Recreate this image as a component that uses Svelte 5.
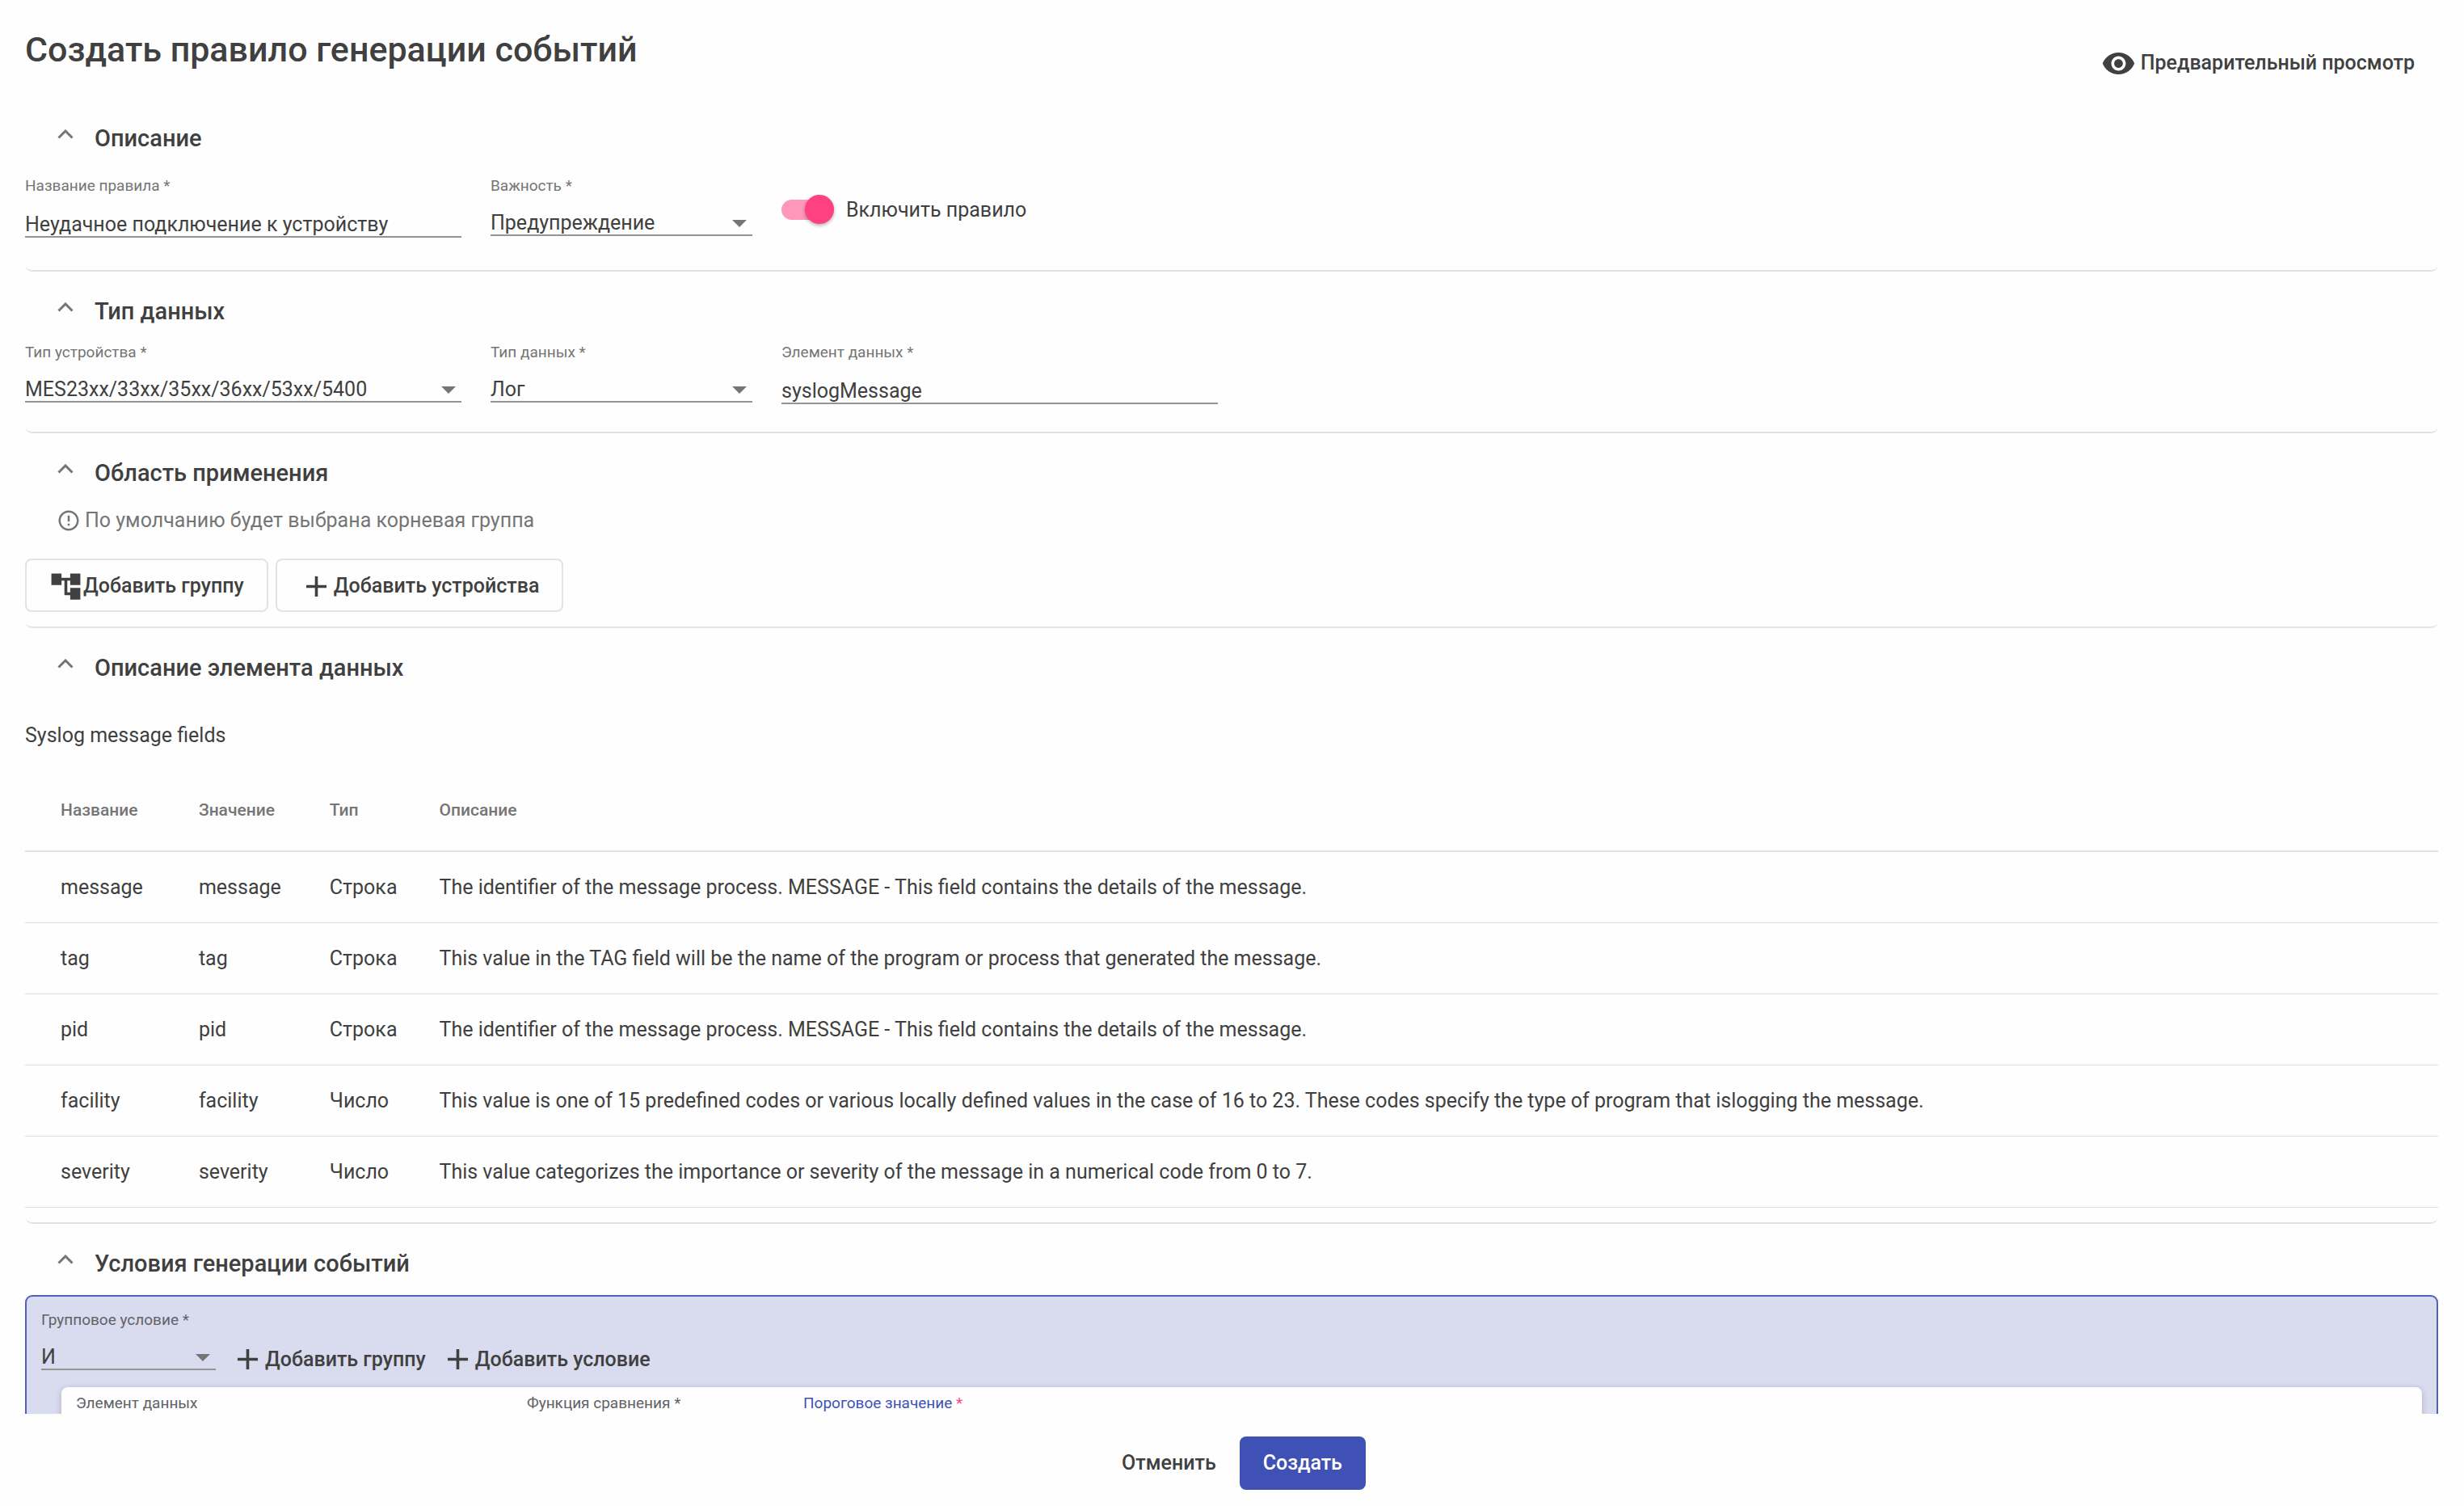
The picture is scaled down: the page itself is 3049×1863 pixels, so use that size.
<script lang="ts">
  type Row = { name: string; value: string; type: string; text: string };

  const fields: Row[] = [
    { name: 'message', value: 'message', type: 'Строка', text: 'The identifier of the message process. MESSAGE - This field contains the details of the message.' },
    { name: 'tag', value: 'tag', type: 'Строка', text: 'This value in the TAG field will be the name of the program or process that generated the message.' },
    { name: 'pid', value: 'pid', type: 'Строка', text: 'The identifier of the message process. MESSAGE - This field contains the details of the message.' },
    { name: 'facility', value: 'facility', type: 'Число', text: 'This value is one of 15 predefined codes or various locally defined values in the case of 16 to 23. These codes specify the type of program that islogging the message.' },
    { name: 'severity', value: 'severity', type: 'Число', text: 'This value categorizes the importance or severity of the message in a numerical code from 0 to 7.' }
  ];

  let open = $state({ about: true, data: true, scope: true, element: true, rules: true });
  let ruleName = $state('Неудачное подключение к устройству');
  let element = $state('syslogMessage');
  let threshold = $state('');
  let enabled = $state(true);
</script>

{#snippet sectionTitle(key: keyof typeof open, text: string)}
  <h2>
    <button type="button" class="toggle-section" aria-expanded={open[key]} onclick={() => (open[key] = !open[key])}>
      <svg class="chevron" class:closed={!open[key]} viewBox="0 0 20 12" aria-hidden="true">
        <path d="M1.5 10.5 10 2l8.5 8.5" />
      </svg>
      <span>{text}</span>
    </button>
  </h2>
{/snippet}

{#snippet plus()}
  <svg class="icon" viewBox="0 0 24 24" aria-hidden="true"><path d="M19 13h-6v6h-2v-6H5v-2h6V5h2v6h6v2z" /></svg>
{/snippet}

{#snippet arrow()}
  <svg class="arrow" viewBox="0 0 18 9" aria-hidden="true"><path d="M0 0h18l-9 9z" /></svg>
{/snippet}

<div class="page">
  <main>
    <header>
      <h1>Создать правило генерации событий</h1>
      <button type="button" class="btn preview">
        <svg class="icon" viewBox="0 0 24 24" aria-hidden="true">
          <path d="M12 4.5C7 4.5 2.73 7.61 1 12c1.73 4.39 6 7.5 11 7.5s9.27-3.11 11-7.5c-1.73-4.39-6-7.5-11-7.5zM12 17c-2.76 0-5-2.24-5-5s2.24-5 5-5 5 2.24 5 5-2.24 5-5 5zm0-8c-1.66 0-3 1.34-3 3s1.34 3 3 3 3-1.34 3-3-1.34-3-3-3z" />
        </svg>
        Предварительный просмотр
      </button>
    </header>

    <section>
      {@render sectionTitle('about', 'Описание')}
      {#if open.about}
        <div class="fields roomy">
          <div class="field">
            <label for="rule-name">Название правила *</label>
            <input id="rule-name" type="text" bind:value={ruleName} />
          </div>
          <div class="field">
            <label for="level">Важность *</label>
            <div class="select">
              <select id="level"><option>Предупреждение</option></select>
              {@render arrow()}
            </div>
          </div>
          <label class="switch">
            <input type="checkbox" role="switch" bind:checked={enabled} />
            Включить правило
          </label>
        </div>
      {/if}
    </section>

    <section>
      {@render sectionTitle('data', 'Тип данных')}
      {#if open.data}
        <div class="fields">
          <div class="field">
            <label for="device-type">Тип устройства *</label>
            <div class="select">
              <select id="device-type"><option>MES23xx/33xx/35xx/36xx/53xx/5400</option></select>
              {@render arrow()}
            </div>
          </div>
          <div class="field">
            <label for="data-type">Тип данных *</label>
            <div class="select">
              <select id="data-type"><option>Лог</option></select>
              {@render arrow()}
            </div>
          </div>
          <div class="field">
            <label for="data-element">Элемент данных *</label>
            <input id="data-element" type="text" bind:value={element} />
          </div>
        </div>
      {/if}
    </section>

    <section>
      {@render sectionTitle('scope', 'Область применения')}
      {#if open.scope}
        <p class="hint">
          <svg viewBox="0 0 24 24" aria-hidden="true">
            <path d="M11 15h2v2h-2zm0-8h2v6h-2zm.99-5C6.47 2 2 6.48 2 12s4.47 10 9.99 10C17.52 22 22 17.52 22 12S17.52 2 11.99 2zM12 20c-4.42 0-8-3.58-8-8s3.58-8 8-8 8 3.58 8 8-3.58 8-8 8z" />
          </svg>
          По умолчанию будет выбрана корневая группа
        </p>
        <div class="actions">
          <button type="button" class="btn outlined">
            <svg class="icon" viewBox="0 0 24 24" aria-hidden="true"><path d="M22 11V3h-7v3H9V3H2v8h7V8h2v10h4v3h7v-8h-7v3h-2V8h2v3z" /></svg>
            Добавить группу
          </button>
          <button type="button" class="btn outlined">{@render plus()}Добавить устройства</button>
        </div>
      {/if}
    </section>

    <section>
      {@render sectionTitle('element', 'Описание элемента данных')}
      {#if open.element}
        <p class="caption">Syslog message fields</p>
        <table>
          <thead>
            <tr><th scope="col">Название</th><th scope="col">Значение</th><th scope="col">Тип</th><th scope="col">Описание</th></tr>
          </thead>
          <tbody>
            {#each fields as row (row.name)}
              <tr><td>{row.name}</td><td>{row.value}</td><td>{row.type}</td><td>{row.text}</td></tr>
            {/each}
          </tbody>
        </table>
      {/if}
    </section>

    <section>
      {@render sectionTitle('rules', 'Условия генерации событий')}
      {#if open.rules}
        <div class="group">
          <div class="group-head">
            <div class="field">
              <label for="group-op">Групповое условие *</label>
              <div class="select">
                <select id="group-op"><option>И</option><option>ИЛИ</option></select>
                {@render arrow()}
              </div>
            </div>
            <button type="button" class="btn inline">{@render plus()}Добавить группу</button>
            <button type="button" class="btn inline">{@render plus()}Добавить условие</button>
          </div>
          <div class="condition">
            <div class="field">
              <label for="cond-element">Элемент данных</label>
              <div class="select"><select id="cond-element"></select></div>
            </div>
            <div class="field">
              <label for="cond-fn">Функция сравнения *</label>
              <div class="select"><select id="cond-fn"></select></div>
            </div>
            <div class="field active">
              <label for="cond-value">Пороговое значение <span class="star">*</span></label>
              <input id="cond-value" type="text" bind:value={threshold} />
            </div>
          </div>
        </div>
      {/if}
    </section>
  </main>

  <footer>
    <button type="button" class="btn cancel">Отменить</button>
    <button type="button" class="btn primary">Создать</button>
  </footer>
</div>

<style>
  :global(body) {
    background: #fefefe;
  }

  .page {
    --text: #404040;
    --muted: #757575;
    --line: #e3e3e3;
    --primary: #3f51b5;
    --accent: #ff4081;
    display: flex;
    flex-direction: column;
    height: 100vh;
    color: var(--text);
    font-family: Roboto, 'Noto Sans', sans-serif;
    font-size: 25px;
    line-height: 30px;
  }

  main {
    flex: 1;
    min-height: 0;
    overflow: hidden;
    padding: 0 32px 0 31px;
  }

  h1, h2, p {
    margin: 0;
  }

  button, input, select {
    font: inherit;
    color: inherit;
  }

  header {
    display: flex;
    justify-content: space-between;
    height: 122px;
  }

  h1 {
    padding-top: 36px;
    font-size: 43px;
    font-weight: 500;
    line-height: 50px;
  }

  section {
    border-bottom: 2px solid var(--line);
    border-radius: 0 0 9px 9px;
  }

  .toggle-section {
    display: flex;
    align-items: flex-start;
    gap: 26px;
    padding: 32px 0 0 40px;
    border: 0;
    background: none;
    font-size: 29px;
    font-weight: 500;
    line-height: 34px;
    cursor: pointer;
  }

  .chevron {
    width: 20px;
    height: 12px;
    margin-top: 6px;
    fill: none;
    stroke: var(--muted);
    stroke-width: 3;
  }

  .chevron.closed {
    transform: rotate(180deg);
  }

  .fields {
    display: grid;
    grid-template-columns: 540px 324px 540px;
    column-gap: 36px;
    align-items: start;
    padding: 23px 0 34px;
  }

  .fields.roomy {
    padding: 31px 0 40px;
  }

  .field {
    display: flex;
    flex-direction: column;
    gap: 20px;
  }

  .field label {
    color: var(--muted);
    font-size: 19px;
    line-height: 22px;
  }

  .field input,
  .field select {
    box-sizing: border-box;
    width: 100%;
    height: 31px;
    padding: 0;
    border: 0;
    border-bottom: 2px solid #949494;
    border-radius: 0;
    outline: 0;
    appearance: none;
    background: none;
    line-height: 29px;
  }

  .field input {
    height: 33px;
    padding-top: 2px;
  }

  .select {
    display: grid;
    align-items: center;
  }

  .select > :global(*) {
    grid-area: 1 / 1;
  }

  .arrow {
    width: 18px;
    height: 9px;
    margin-right: 7px;
    justify-self: end;
    fill: var(--muted);
    pointer-events: none;
  }

  .switch {
    display: flex;
    align-items: center;
    gap: 15px;
    padding-top: 22px;
  }

  .switch input {
    position: relative;
    flex: none;
    width: 65px;
    height: 25px;
    margin: 6px 0;
    border-radius: 13px;
    appearance: none;
    background: #bdbdbd;
  }

  .switch input::after {
    content: '';
    position: absolute;
    top: -6px;
    left: 0;
    width: 36px;
    height: 36px;
    border-radius: 50%;
    background: #fafafa;
    box-shadow: 0 2px 4px rgb(0 0 0 / 30%);
  }

  .switch input:checked {
    background: #ff97ba;
  }

  .switch input:checked::after {
    left: 29px;
    background: var(--accent);
  }

  .hint {
    display: flex;
    align-items: center;
    gap: 5px;
    padding: 27px 0 32px 39px;
    color: var(--muted);
  }

  .hint svg {
    width: 30px;
    height: 30px;
    fill: currentColor;
  }

  .actions {
    display: flex;
    gap: 9px;
    padding-bottom: 18px;
  }

  .btn {
    display: flex;
    align-items: center;
    box-sizing: border-box;
    height: 66px;
    padding: 0 29px;
    border: 0;
    border-radius: 8px;
    background: none;
    font-weight: 500;
    cursor: pointer;
  }

  .icon {
    flex: none;
    width: 43px;
    height: 43px;
    fill: currentColor;
  }

  .outlined {
    padding: 2px 28px 0 27px;
    border: 2px solid var(--line);
  }

  .preview {
    gap: 6px;
    margin-top: 45px;
  }

  .inline {
    height: 43px;
    padding: 0;
  }

  .caption {
    padding: 52px 0 27px;
  }

  table {
    width: 100%;
    border-collapse: separate;
    border-spacing: 0;
    margin-bottom: 18px;
  }

  th, td {
    padding: 0 60px 0 0;
    border-bottom: 1px solid #dcdcdc;
    text-align: left;
    white-space: nowrap;
  }

  th {
    height: 100px;
    border-bottom: 2px solid var(--line);
    color: var(--muted);
    font-size: 21px;
    font-weight: 500;
  }

  td {
    height: 87px;
  }

  th:first-child,
  td:first-child {
    padding-right: 69px;
    padding-left: 44px;
  }

  th:nth-child(3),
  td:nth-child(3) {
    padding-right: 52px;
  }

  th:last-child,
  td:last-child {
    width: 100%;
    padding-right: 44px;
  }

  .group {
    margin-top: 22px;
    padding: 18px;
    border: 2px solid #5060bb;
    border-radius: 9px;
    background: #d9dbef;
  }

  .group label {
    color: #616166;
  }

  .group-head {
    display: flex;
    align-items: flex-end;
    gap: 18px;
    padding-bottom: 13px;
  }

  .group-head .field {
    width: 216px;
    padding-bottom: 8px;
  }

  .condition {
    display: grid;
    grid-template-columns: 540px 324px 540px;
    column-gap: 18px;
    margin-left: 25px;
    padding: 9px 18px 30px;
    border-radius: 8px;
    background: #fefefe;
    box-shadow: 0 2px 8px rgb(0 0 0 / 20%);
  }

  .group .active label {
    color: var(--primary);
  }

  .active .star {
    color: var(--accent);
  }

  footer {
    display: flex;
    justify-content: center;
    padding: 28px 0 20px;
  }

  .primary {
    background: var(--primary);
    color: #fff;
  }
</style>
